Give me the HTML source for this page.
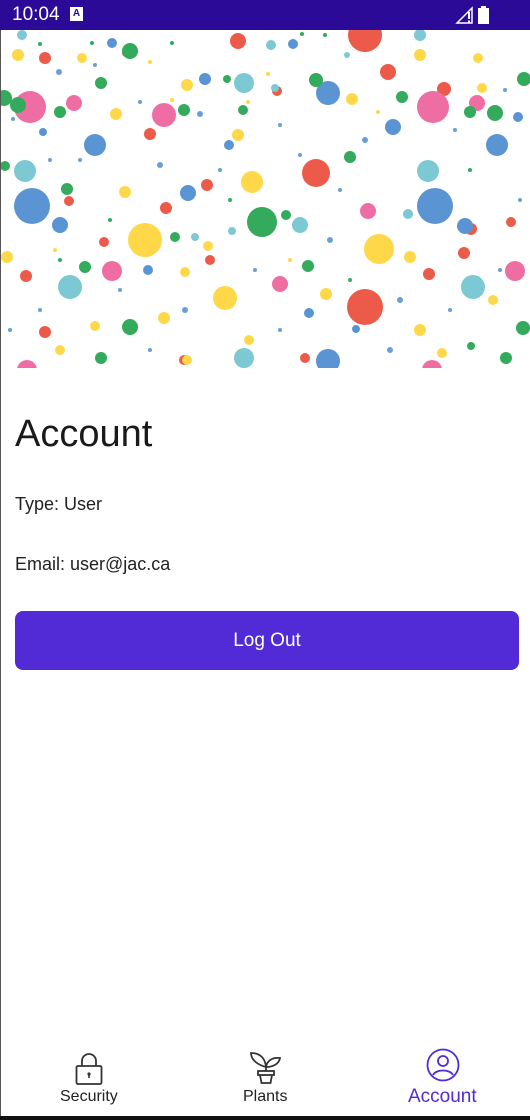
<!DOCTYPE html>
<html><head><meta charset="utf-8"><style>
body{margin:0;width:530px;height:1120px;background:#fff;position:relative;overflow:hidden;font-family:"Liberation Sans",sans-serif;}
.sb{position:absolute;top:0;left:0;width:530px;height:30px;background:#2a0a97;color:#fff;}
.edge{position:absolute;left:0;top:30px;width:1px;height:1086px;background:#555;}
h1{position:absolute;left:15px;top:413px;margin:0;font-size:38px;font-weight:normal;color:#1a1a1a;font-family:"Liberation Sans",sans-serif;}
.t{position:absolute;left:15px;font-size:18px;color:#222;font-family:"Liberation Sans",sans-serif;}
.btn{position:absolute;left:15px;top:611px;width:504px;height:59px;background:#522ad6;border-radius:8px;color:#fff;font-size:19px;text-align:center;line-height:59px;font-family:"Liberation Sans",sans-serif;}
.lbl{position:absolute;top:1088px;font-size:16px;color:#222;}
.bb{position:absolute;left:0;top:1116px;width:530px;height:4px;background:#111;}
</style></head><body>
<div class="sb">
<span style="position:absolute;left:12px;top:4px;font-size:19px;">10:04</span>
<div style="position:absolute;left:70px;top:7px;width:13px;height:14px;background:#fff;color:#2a0a97;font-size:10px;font-weight:bold;text-align:center;line-height:13px;">A</div>
<svg style="position:absolute;left:455px;top:6px" width="40" height="18"><path d="M2 17 L17 2 V17 Z" fill="none" stroke="#fff" stroke-width="1.5"/><rect x="13" y="6" width="2" height="7" fill="#fff"/><rect x="13" y="14.5" width="2" height="2" fill="#fff"/><rect x="23" y="2" width="11" height="16" fill="#fff"/><rect x="26" y="0" width="5" height="3" fill="#fff"/></svg>
</div>
<svg style="position:absolute;left:0;top:30px" width="530" height="338">
<g fill="#ec5a4a">
<circle cx="365" cy="5" r="17"/><circle cx="316" cy="143" r="14"/><circle cx="365" cy="277" r="18"/><circle cx="45" cy="28" r="6"/><circle cx="388" cy="42" r="8"/><circle cx="238" cy="11" r="8"/><circle cx="150" cy="104" r="6"/><circle cx="69" cy="171" r="5"/><circle cx="207" cy="155" r="6"/><circle cx="166" cy="178" r="6"/><circle cx="444" cy="59" r="7"/><circle cx="471" cy="199" r="6"/><circle cx="26" cy="246" r="6"/><circle cx="429" cy="244" r="6"/><circle cx="45" cy="302" r="6"/><circle cx="184" cy="330" r="5"/><circle cx="464" cy="223" r="6"/><circle cx="210" cy="230" r="5"/><circle cx="104" cy="212" r="5"/><circle cx="511" cy="192" r="5"/><circle cx="305" cy="328" r="5"/><circle cx="126" cy="23" r="4"/><circle cx="277" cy="61" r="5"/></g>
<g fill="#ee6ea3">
<circle cx="30" cy="77" r="16"/><circle cx="433" cy="77" r="16"/><circle cx="164" cy="85" r="12"/><circle cx="112" cy="241" r="10"/><circle cx="515" cy="241" r="10"/><circle cx="74" cy="73" r="8"/><circle cx="477" cy="73" r="8"/><circle cx="368" cy="181" r="8"/><circle cx="280" cy="254" r="8"/><circle cx="27" cy="340" r="10"/><circle cx="432" cy="340" r="10"/></g>
<g fill="#5b94d3">
<circle cx="32" cy="176" r="18"/><circle cx="435" cy="176" r="18"/><circle cx="328" cy="63" r="12"/><circle cx="95" cy="115" r="11"/><circle cx="497" cy="115" r="11"/><circle cx="328" cy="331" r="12"/><circle cx="188" cy="163" r="8"/><circle cx="393" cy="97" r="8"/><circle cx="293" cy="14" r="5"/><circle cx="148" cy="240" r="5"/><circle cx="465" cy="196" r="8"/><circle cx="112" cy="13" r="5"/><circle cx="205" cy="49" r="6"/><circle cx="229" cy="115" r="5"/><circle cx="518" cy="87" r="5"/><circle cx="43" cy="102" r="4"/><circle cx="356" cy="299" r="4"/><circle cx="60" cy="195" r="8"/><circle cx="309" cy="283" r="5"/></g>
<g fill="#ffd84a">
<circle cx="145" cy="210" r="17"/><circle cx="379" cy="219" r="15"/><circle cx="252" cy="152" r="11"/><circle cx="225" cy="268" r="12"/><circle cx="18" cy="25" r="6"/><circle cx="82" cy="28" r="5"/><circle cx="420" cy="25" r="6"/><circle cx="478" cy="28" r="5"/><circle cx="187" cy="55" r="6"/><circle cx="352" cy="69" r="6"/><circle cx="116" cy="84" r="6"/><circle cx="238" cy="105" r="6"/><circle cx="482" cy="58" r="5"/><circle cx="125" cy="162" r="6"/><circle cx="7" cy="227" r="6"/><circle cx="410" cy="227" r="6"/><circle cx="208" cy="216" r="5"/><circle cx="185" cy="242" r="5"/><circle cx="326" cy="264" r="6"/><circle cx="164" cy="288" r="6"/><circle cx="60" cy="320" r="5"/><circle cx="187" cy="330" r="5"/><circle cx="420" cy="300" r="6"/><circle cx="442" cy="323" r="5"/><circle cx="95" cy="296" r="5"/><circle cx="249" cy="310" r="5"/><circle cx="493" cy="270" r="5"/></g>
<g fill="#33aa5c">
<circle cx="262" cy="192" r="15"/><circle cx="130" cy="21" r="8"/><circle cx="130" cy="297" r="8"/><circle cx="4" cy="68" r="8"/><circle cx="18" cy="75" r="8"/><circle cx="60" cy="82" r="6"/><circle cx="101" cy="53" r="6"/><circle cx="184" cy="80" r="6"/><circle cx="227" cy="49" r="4"/><circle cx="316" cy="50" r="7"/><circle cx="402" cy="67" r="6"/><circle cx="470" cy="82" r="6"/><circle cx="495" cy="83" r="8"/><circle cx="524" cy="49" r="7"/><circle cx="286" cy="185" r="5"/><circle cx="67" cy="159" r="6"/><circle cx="5" cy="136" r="5"/><circle cx="243" cy="80" r="5"/><circle cx="308" cy="236" r="6"/><circle cx="85" cy="237" r="6"/><circle cx="506" cy="328" r="6"/><circle cx="101" cy="328" r="6"/><circle cx="471" cy="316" r="4"/><circle cx="523" cy="298" r="7"/><circle cx="350" cy="127" r="6"/><circle cx="175" cy="207" r="5"/></g>
<g fill="#7cc8d3">
<circle cx="244" cy="53" r="10"/><circle cx="25" cy="141" r="11"/><circle cx="428" cy="141" r="11"/><circle cx="70" cy="257" r="12"/><circle cx="473" cy="257" r="12"/><circle cx="244" cy="328" r="10"/><circle cx="300" cy="195" r="8"/><circle cx="22" cy="5" r="5"/><circle cx="420" cy="5" r="6"/><circle cx="271" cy="15" r="5"/><circle cx="275" cy="58" r="4"/><circle cx="195" cy="207" r="4"/><circle cx="232" cy="201" r="4"/><circle cx="408" cy="184" r="5"/><circle cx="347" cy="25" r="3"/></g>
<g fill="#5b94d3" opacity=".9">
<circle cx="59" cy="42" r="3"/><circle cx="95" cy="35" r="2"/><circle cx="140" cy="72" r="2"/><circle cx="200" cy="84" r="3"/><circle cx="280" cy="95" r="2"/><circle cx="300" cy="125" r="2"/><circle cx="13" cy="89" r="2"/><circle cx="160" cy="135" r="3"/><circle cx="50" cy="130" r="2"/><circle cx="220" cy="140" r="2"/><circle cx="365" cy="110" r="3"/><circle cx="455" cy="100" r="2"/><circle cx="505" cy="60" r="2"/><circle cx="330" cy="210" r="3"/><circle cx="255" cy="240" r="2"/><circle cx="185" cy="280" r="3"/><circle cx="120" cy="260" r="2"/><circle cx="40" cy="280" r="2"/><circle cx="10" cy="300" r="2"/><circle cx="280" cy="300" r="2"/><circle cx="400" cy="270" r="3"/><circle cx="450" cy="280" r="2"/><circle cx="500" cy="240" r="2"/><circle cx="520" cy="170" r="2"/><circle cx="150" cy="320" r="2"/><circle cx="390" cy="320" r="3"/><circle cx="80" cy="130" r="2"/><circle cx="340" cy="160" r="2"/></g>
<g fill="#33aa5c"><circle cx="40" cy="14" r="2"/><circle cx="92" cy="13" r="2"/><circle cx="172" cy="13" r="2"/><circle cx="302" cy="4" r="2"/><circle cx="325" cy="5" r="2"/><circle cx="230" cy="170" r="2"/><circle cx="110" cy="190" r="2"/><circle cx="350" cy="250" r="2"/><circle cx="60" cy="230" r="2"/><circle cx="470" cy="140" r="2"/></g>
<g fill="#ffd84a"><circle cx="150" cy="32" r="2"/><circle cx="172" cy="70" r="2"/><circle cx="248" cy="72" r="2"/><circle cx="268" cy="44" r="2"/><circle cx="378" cy="82" r="2"/><circle cx="290" cy="230" r="2"/><circle cx="55" cy="220" r="2"/></g>
</svg>
<div class="edge"></div>
<h1>Account</h1>
<div class="t" style="top:494px">Type: User</div>
<div class="t" style="top:554px">Email: user@jac.ca</div>
<div class="btn">Log Out</div>
<svg style="position:absolute;left:74px;top:1052px" width="30" height="34" fill="none" stroke="#333" stroke-width="1.8"><path d="M8 14 V9 a7 7 0 0 1 14 0 V14"/><rect x="2.5" y="14" width="25" height="18" rx="1.5"/><circle cx="15" cy="22" r="1.6" fill="#333" stroke="none"/><rect x="14.2" y="22" width="1.6" height="4" fill="#333" stroke="none"/></svg>
<div class="lbl" style="left:60px">Security</div>
<svg style="position:absolute;left:248px;top:1051px" width="36" height="34" fill="none" stroke="#333" stroke-width="1.8"><path d="M18 16 C10 14 3 9 3 2 C11 2 17 6 18 16 Z"/><path d="M18 16 C19 10 24 6 32 7 C31 13 25 16 18 16 Z"/><path d="M18 16 V20"/><rect x="10" y="20" width="16" height="4"/><path d="M12 24 L13.5 32 H22.5 L24 24"/></svg>
<div class="lbl" style="left:243px">Plants</div>
<svg style="position:absolute;left:421px;top:1048px" width="42" height="34" fill="none" stroke="#522ad6" stroke-width="1.8"><circle cx="22" cy="17" r="15.5"/><circle cx="22" cy="13" r="5"/><path d="M12 27 C15 21 29 21 32 27"/></svg>
<div class="lbl" style="left:408px;color:#522ad6;font-size:19px;top:1086px">Account</div>
<div class="bb"></div>
</body></html>
